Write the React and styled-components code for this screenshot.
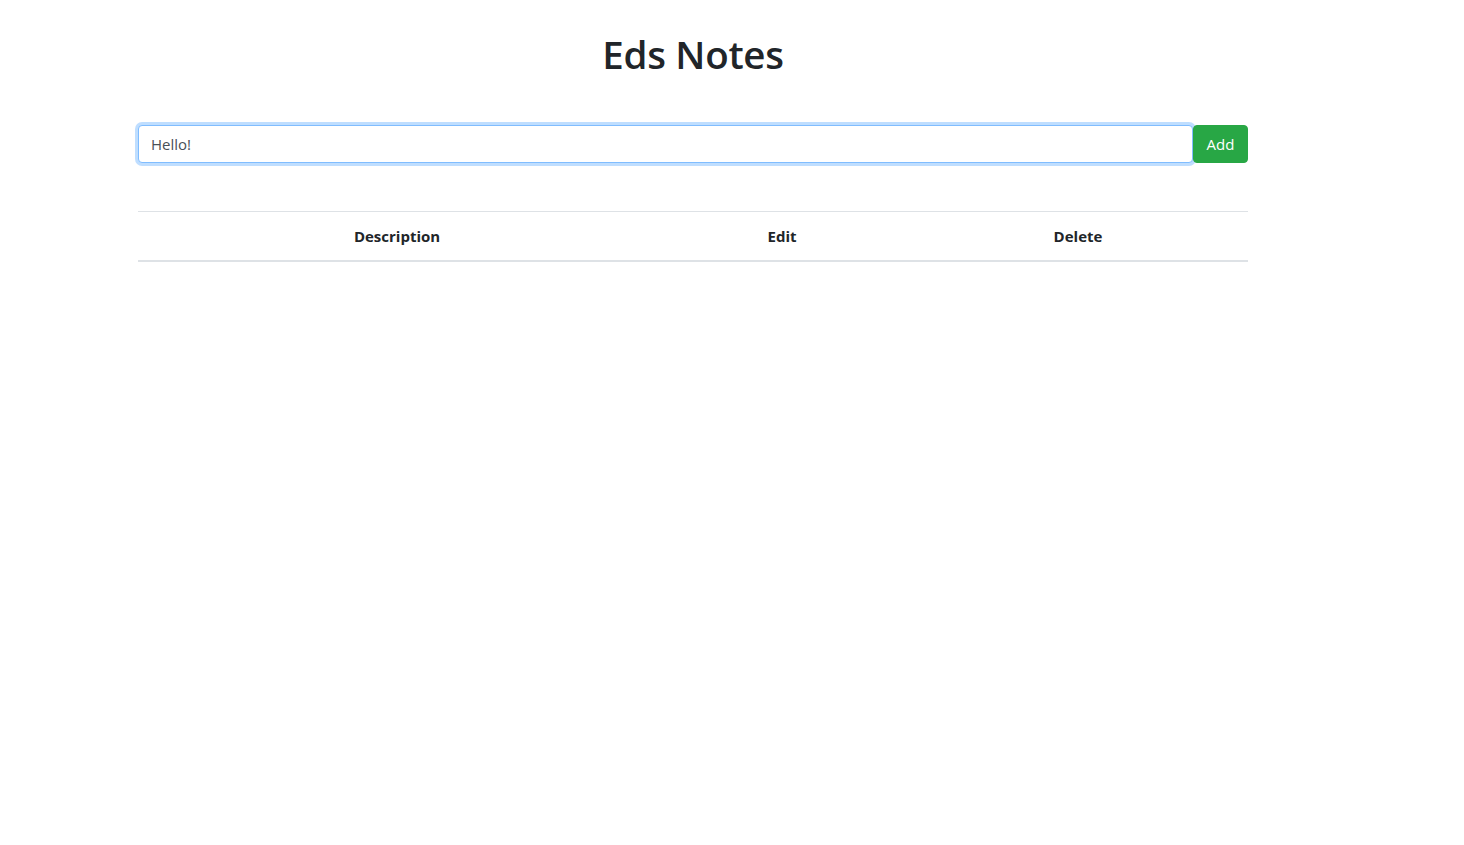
import React, { useState } from "react";
import styled, { createGlobalStyle } from "styled-components";

const Global = createGlobalStyle`
  body {
    margin: 0;
    background: #ffffff;
    font-family: "Open Sans", "Noto Sans", sans-serif;
    color: #212529;
  }
`;

const Page = styled("div")`
  width: 1110px;
  margin-left: 138px;
  padding-top: 31px;
`;

const Title = styled("h1")`
  margin: 0 0 48px;
  text-align: center;
  font-size: 38.5px;
  font-weight: 600;
  line-height: 1.2;
  letter-spacing: -0.3px;
  color: #212529;
`;

const InputRow = styled("div")`
  display: flex;
  height: 38px;
`;

const NoteInput = styled("input")`
  flex: 1;
  box-sizing: border-box;
  height: 38px;
  padding: 6px 12px;
  font-family: inherit;
  font-size: 15px;
  color: #495057;
  border: 1px solid #80bdff;
  border-radius: 4px;
  box-shadow: 0 0 0 3px rgba(0, 123, 255, 0.25);
  outline: none;
`;

const AddButton = styled("button")`
  width: 55px;
  height: 38px;
  border: 1px solid #28a745;
  border-radius: 4px;
  background: #28a745;
  color: #ffffff;
  font-family: inherit;
  font-size: 15px;
  cursor: pointer;
`;

const Table = styled("table")`
  width: 100%;
  margin-top: 48px;
  border-collapse: collapse;
  table-layout: fixed;
`;

const Th = styled("th")`
  width: ${(p) => p.$w}px;
  height: 48px;
  padding: 0;
  border-top: 1px solid #dee2e6;
  border-bottom: 2px solid #dee2e6;
  font-size: 15px;
  font-weight: 700;
  text-align: center;
  color: #212529;
`;

export default function App() {
  const [text, setText] = useState("Hello!");

  return (
    <>
      <Global />
      <Page>
        <Title>Eds Notes</Title>
        <InputRow>
          <NoteInput value={text} onChange={(e) => setText(e.target.value)} autoFocus />
          <AddButton>Add</AddButton>
        </InputRow>
        <Table>
          <thead>
            <tr>
              <Th $w={518}>Description</Th>
              <Th $w={252}>Edit</Th>
              <Th $w={340}>Delete</Th>
            </tr>
          </thead>
          <tbody></tbody>
        </Table>
      </Page>
    </>
  );
}
